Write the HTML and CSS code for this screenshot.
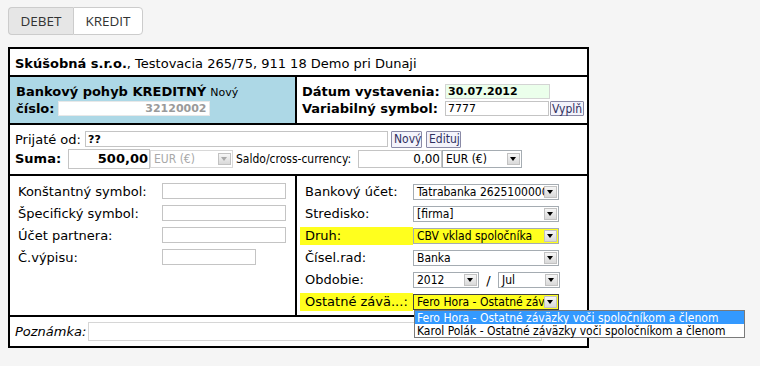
FILE: index.html
```html
<!DOCTYPE html>
<html lang="sk">
<head>
<meta charset="utf-8">
<title>Bankový pohyb</title>
<link rel="stylesheet" href="styles.css">
</head>
<body>
<div class="tabs">
  <button class="tab tab-off">DEBET</button>
  <button class="tab tab-on">KREDIT</button>
</div>
<div class="form">
  <div class="r-head"><b>Skúšobná s.r.o.</b>, Testovacia 265/75, 911 18 Demo pri Dunaji</div>
  <div class="r-doc">
    <div class="doc-left">
      <div class="doc-title"><b>Bankový pohyb KREDITNÝ</b> <span class="note">Nový</span></div>
      <div class="doc-num"><b>číslo:</b><input class="inp inp-num" value="32120002" readonly></div>
    </div>
    <div class="doc-right">
      <b>Dátum vystavenia:</b><input class="inp inp-date" value="30.07.2012"><span></span>
      <b>Variabilný symbol:</b><input class="inp inp-vs" value="7777"><button class="btn btn-vyp">Vyplň</button>
    </div>
  </div>
  <div class="r-partner">
    <div class="line l1"><span class="lbl-prij">Prijaté od:</span><input class="inp inp-prij" value="??"><button class="btn btn-novy">Nový</button><button class="btn btn-edit">Edituj</button></div>
    <div class="line l2"><b class="lbl-suma">Suma:</b><input class="inp inp-suma" value="500,00"><span class="sel sel-dis w-eur1"><span class="sel-t">EUR (€)</span><span class="sel-b"></span></span><span class="saldo">Saldo/cross-currency:</span><input class="inp inp-saldo" value="0,00"><span class="sel w-eur2"><span class="sel-t">EUR (€)</span><span class="sel-b"></span></span></div>
  </div>
  <div class="r-detail">
    <div class="col-left">
      <span class="lbl">Konštantný symbol:</span><input class="inp inp-d">
      <span class="lbl">Špecifický symbol:</span><input class="inp inp-d">
      <span class="lbl">Účet partnera:</span><input class="inp inp-d">
      <span class="lbl">Č.výpisu:</span><input class="inp inp-d inp-short">
    </div>
    <div class="col-right">
      <span class="lbl">Bankový účet:</span><span class="sel w-full"><span class="sel-t">Tatrabanka 2625100000/1100</span><span class="sel-b"></span></span>
      <span class="lbl">Stredisko:</span><span class="sel w-full"><span class="sel-t">[firma]</span><span class="sel-b"></span></span>
      <span class="lbl hl">Druh:</span><span class="sel w-full sel-hl"><span class="sel-t">CBV vklad spoločníka</span><span class="sel-b"></span></span>
      <span class="lbl">Čísel.rad:</span><span class="sel w-full"><span class="sel-t">Banka</span><span class="sel-b"></span></span>
      <span class="lbl">Obdobie:</span><span class="period"><span class="sel w-year"><span class="sel-t">2012</span><span class="sel-b"></span></span><span class="slash">/</span><span class="sel w-month"><span class="sel-t">Jul</span><span class="sel-b"></span></span></span>
      <span class="lbl hl">Ostatné závä...:</span><span class="sel w-full sel-hl sel-open"><span class="sel-t">Fero Hora - Ostatné záväzky voči spoločníkom a členom</span><span class="sel-b"></span>
        <span class="dd">
          <span class="dd-opt dd-active">Fero Hora - Ostatné záväzky voči spoločníkom a členom</span>
          <span class="dd-opt">Karol Polák - Ostatné záväzky voči spoločníkom a členom</span>
        </span>
      </span>
    </div>
  </div>
  <div class="r-note"><i>Poznámka:</i><input class="inp inp-note"></div>
</div>
</body>
</html>
```
FILE: styles.css
```css
body {
  margin: 7px 8px;
  background: #f5f5f5;
  font-family: "DejaVu Sans", Verdana, sans-serif;
  font-size: 13px;
  color: #000;
}

.tabs {
  display: flex;
  width: max-content;
}

.tab {
  box-sizing: border-box;
  height: 28px;
  margin: 0;
  padding: 0;
  font: 13.5px "Open Sans", sans-serif;
  color: #333;
  border: 1px solid #ccc;
  background: #fff;
}

.tab-off {
  width: 65px;
  background: #e6e6e6;
  border-radius: 4px 0 0 4px;
  border-right: none;
}

.tab-on {
  width: 70px;
  border-radius: 0 4px 4px 0;
}

.form {
  margin-top: 12px;
  width: 581px;
  box-sizing: border-box;
  border: 2px solid #000;
  background: #fff;
}

.r-head {
  box-sizing: border-box;
  height: 28px;
  border-bottom: 2px solid #000;
  padding: 3px 0 0 5px;
  display: flex;
  align-items: center;
}

.r-doc {
  box-sizing: border-box;
  height: 48px;
  border-bottom: 2px solid #000;
  display: grid;
  grid-template-columns: 287px 1fr;
}

.doc-left {
  background: #add8e6;
  border-right: 2px solid #000;
  padding: 7px 0 0 6px;
}

.doc-title {
  height: 16px;
  line-height: 16px;
}

.note {
  font-size: 11px;
}

.doc-num {
  display: flex;
  align-items: center;
  height: 17px;
  gap: 3px;
}

.inp {
  box-sizing: border-box;
  height: 16px;
  margin: 0;
  padding: 0 2px;
  border: 1px solid #c4c4c4;
  background: #fff;
  font: 11px "DejaVu Sans", Verdana, sans-serif;
  color: #000;
  outline: none;
}

.inp-num {
  width: 152px;
  height: 15px;
  text-align: right;
  font-weight: bold;
  color: #9a9a9a;
  border-color: #e8e8e8;
}

.doc-right {
  padding: 6px 0 0 5px;
  display: grid;
  grid-template-columns: 140px 105px auto;
  grid-auto-rows: 17px;
  column-gap: 3px;
  align-items: center;
  justify-items: start;
}

.inp-date {
  width: 105px;
  height: 15px;
  background: #ebffeb;
  font-weight: bold;
  border-color: #d4d4d4;
}

.inp-vs {
  width: 104px;
  height: 15px;
}

.btn {
  box-sizing: border-box;
  margin: 0;
  padding: 0 2px;
  height: 17px;
  font: 12px "DejaVu Sans Condensed", "DejaVu Sans", sans-serif;
  font-stretch: condensed;
  color: #303060;
  background: #f3f3fb;
  border: 1px solid #8a8aa6;
  border-radius: 1px;
}

.btn-vyp {
  margin-left: -3px;
  width: 34px;
  height: 15px;
  padding: 0 1px;
  line-height: 12px;
}

.r-partner {
  box-sizing: border-box;
  height: 51px;
  border-bottom: 2px solid #000;
  padding: 5px 0 0 5px;
}

.line {
  display: flex;
  align-items: center;
}

.l1 {
  height: 18px;
}

.l2 {
  height: 21px;
}

.lbl-prij {
  width: 70px;
}

.inp-prij {
  width: 303px;
  font-weight: bold;
}

.btn-novy {
  margin-left: 3px;
  width: 31px;
}

.btn-edit {
  margin-left: 4px;
  width: 35px;
}

.lbl-suma {
  width: 53px;
}

.inp-suma {
  width: 82px;
  height: 20px;
  font-size: 13px;
  font-weight: bold;
  text-align: right;
  padding-right: 1px;
}

.saldo {
  margin-left: 3px;
  width: 122px;
  font: 12px "DejaVu Sans Condensed", "DejaVu Sans", sans-serif;
  font-stretch: condensed;
}

.inp-saldo {
  width: 84px;
  height: 18px;
  font-size: 12px;
  text-align: right;
  padding-right: 1px;
}

.sel {
  box-sizing: border-box;
  display: inline-flex;
  align-items: center;
  height: 16px;
  border: 1px solid #a5acb2;
  background: #fff;
  font: 12px "DejaVu Sans Condensed", "DejaVu Sans", sans-serif;
  font-stretch: condensed;
  color: #000;
}

.sel-t {
  flex: 1;
  min-width: 0;
  overflow: hidden;
  white-space: nowrap;
  padding-left: 3px;
  line-height: 14px;
}

.sel-b {
  position: relative;
  flex: none;
  box-sizing: border-box;
  width: 13px;
  height: 12px;
  margin-right: 1px;
  border: 1px solid #c2c2c2;
  background: linear-gradient(#f6f6f6, #d9d9d9);
}

.sel-b::after {
  content: "";
  position: absolute;
  left: 2px;
  top: 3px;
  border-left: 3.5px solid transparent;
  border-right: 3.5px solid transparent;
  border-top: 4px solid #000;
}

.w-eur1 {
  width: 83px;
  height: 18px;
}

.sel-dis {
  color: #a8a8a8;
  border-color: #d8d8d8;
}

.sel-dis .sel-b::after {
  border-top-color: #a8a8a8;
}

.w-eur2 {
  width: 80px;
  height: 18px;
}

.r-detail {
  box-sizing: border-box;
  height: 141px;
  border-bottom: 2px solid #000;
  display: grid;
  grid-template-columns: 287px 1fr;
}

.col-left {
  border-right: 2px solid #000;
  padding: 5px 0 0 8px;
  display: grid;
  grid-template-columns: 144px auto;
  grid-auto-rows: 22px;
  align-items: center;
  align-content: start;
  justify-items: start;
}

.lbl {
  line-height: 18px;
}

.inp-d {
  width: 124px;
  margin-top: -3px;
}

.inp-short {
  width: 94px;
}

.col-right {
  padding: 5px 0 0 8px;
  display: grid;
  grid-template-columns: 108px auto;
  grid-auto-rows: 22px;
  align-items: center;
  align-content: start;
  justify-items: start;
}

.w-full {
  width: 146px;
}

.hl {
  background: #ffff1e;
  margin-left: -5px;
  padding-left: 5px;
  width: 108px;
}

.col-right .hl {
  box-sizing: border-box;
  width: 113px;
}

.sel-hl {
  background: #ffff1e;
}

.sel-open {
  position: relative;
  border-color: #444;
}

.period {
  display: flex;
  align-items: center;
}

.w-year {
  width: 66px;
}

.slash {
  width: 19px;
  text-align: center;
  font-size: 13px;
}

.w-month {
  width: 62px;
}

.dd {
  position: absolute;
  left: 0;
  top: 15px;
  z-index: 2;
  box-sizing: border-box;
  width: 331px;
  display: flex;
  flex-direction: column;
  border: 1px solid #7a7a7a;
  background: #fff;
}

.dd-opt {
  height: 13px;
  line-height: 13px;
  padding-left: 2px;
  white-space: nowrap;
  font: 12px "DejaVu Sans Condensed", "DejaVu Sans", sans-serif;
  font-stretch: condensed;
}

.dd-active {
  background: #3399ff;
  color: #fff;
}

.r-note {
  box-sizing: border-box;
  height: 29px;
  padding-left: 5px;
  display: flex;
  align-items: center;
  gap: 2px;
}

.inp-note {
  width: 454px;
  height: 19px;
  border-color: #d6d6d6;
}
```
